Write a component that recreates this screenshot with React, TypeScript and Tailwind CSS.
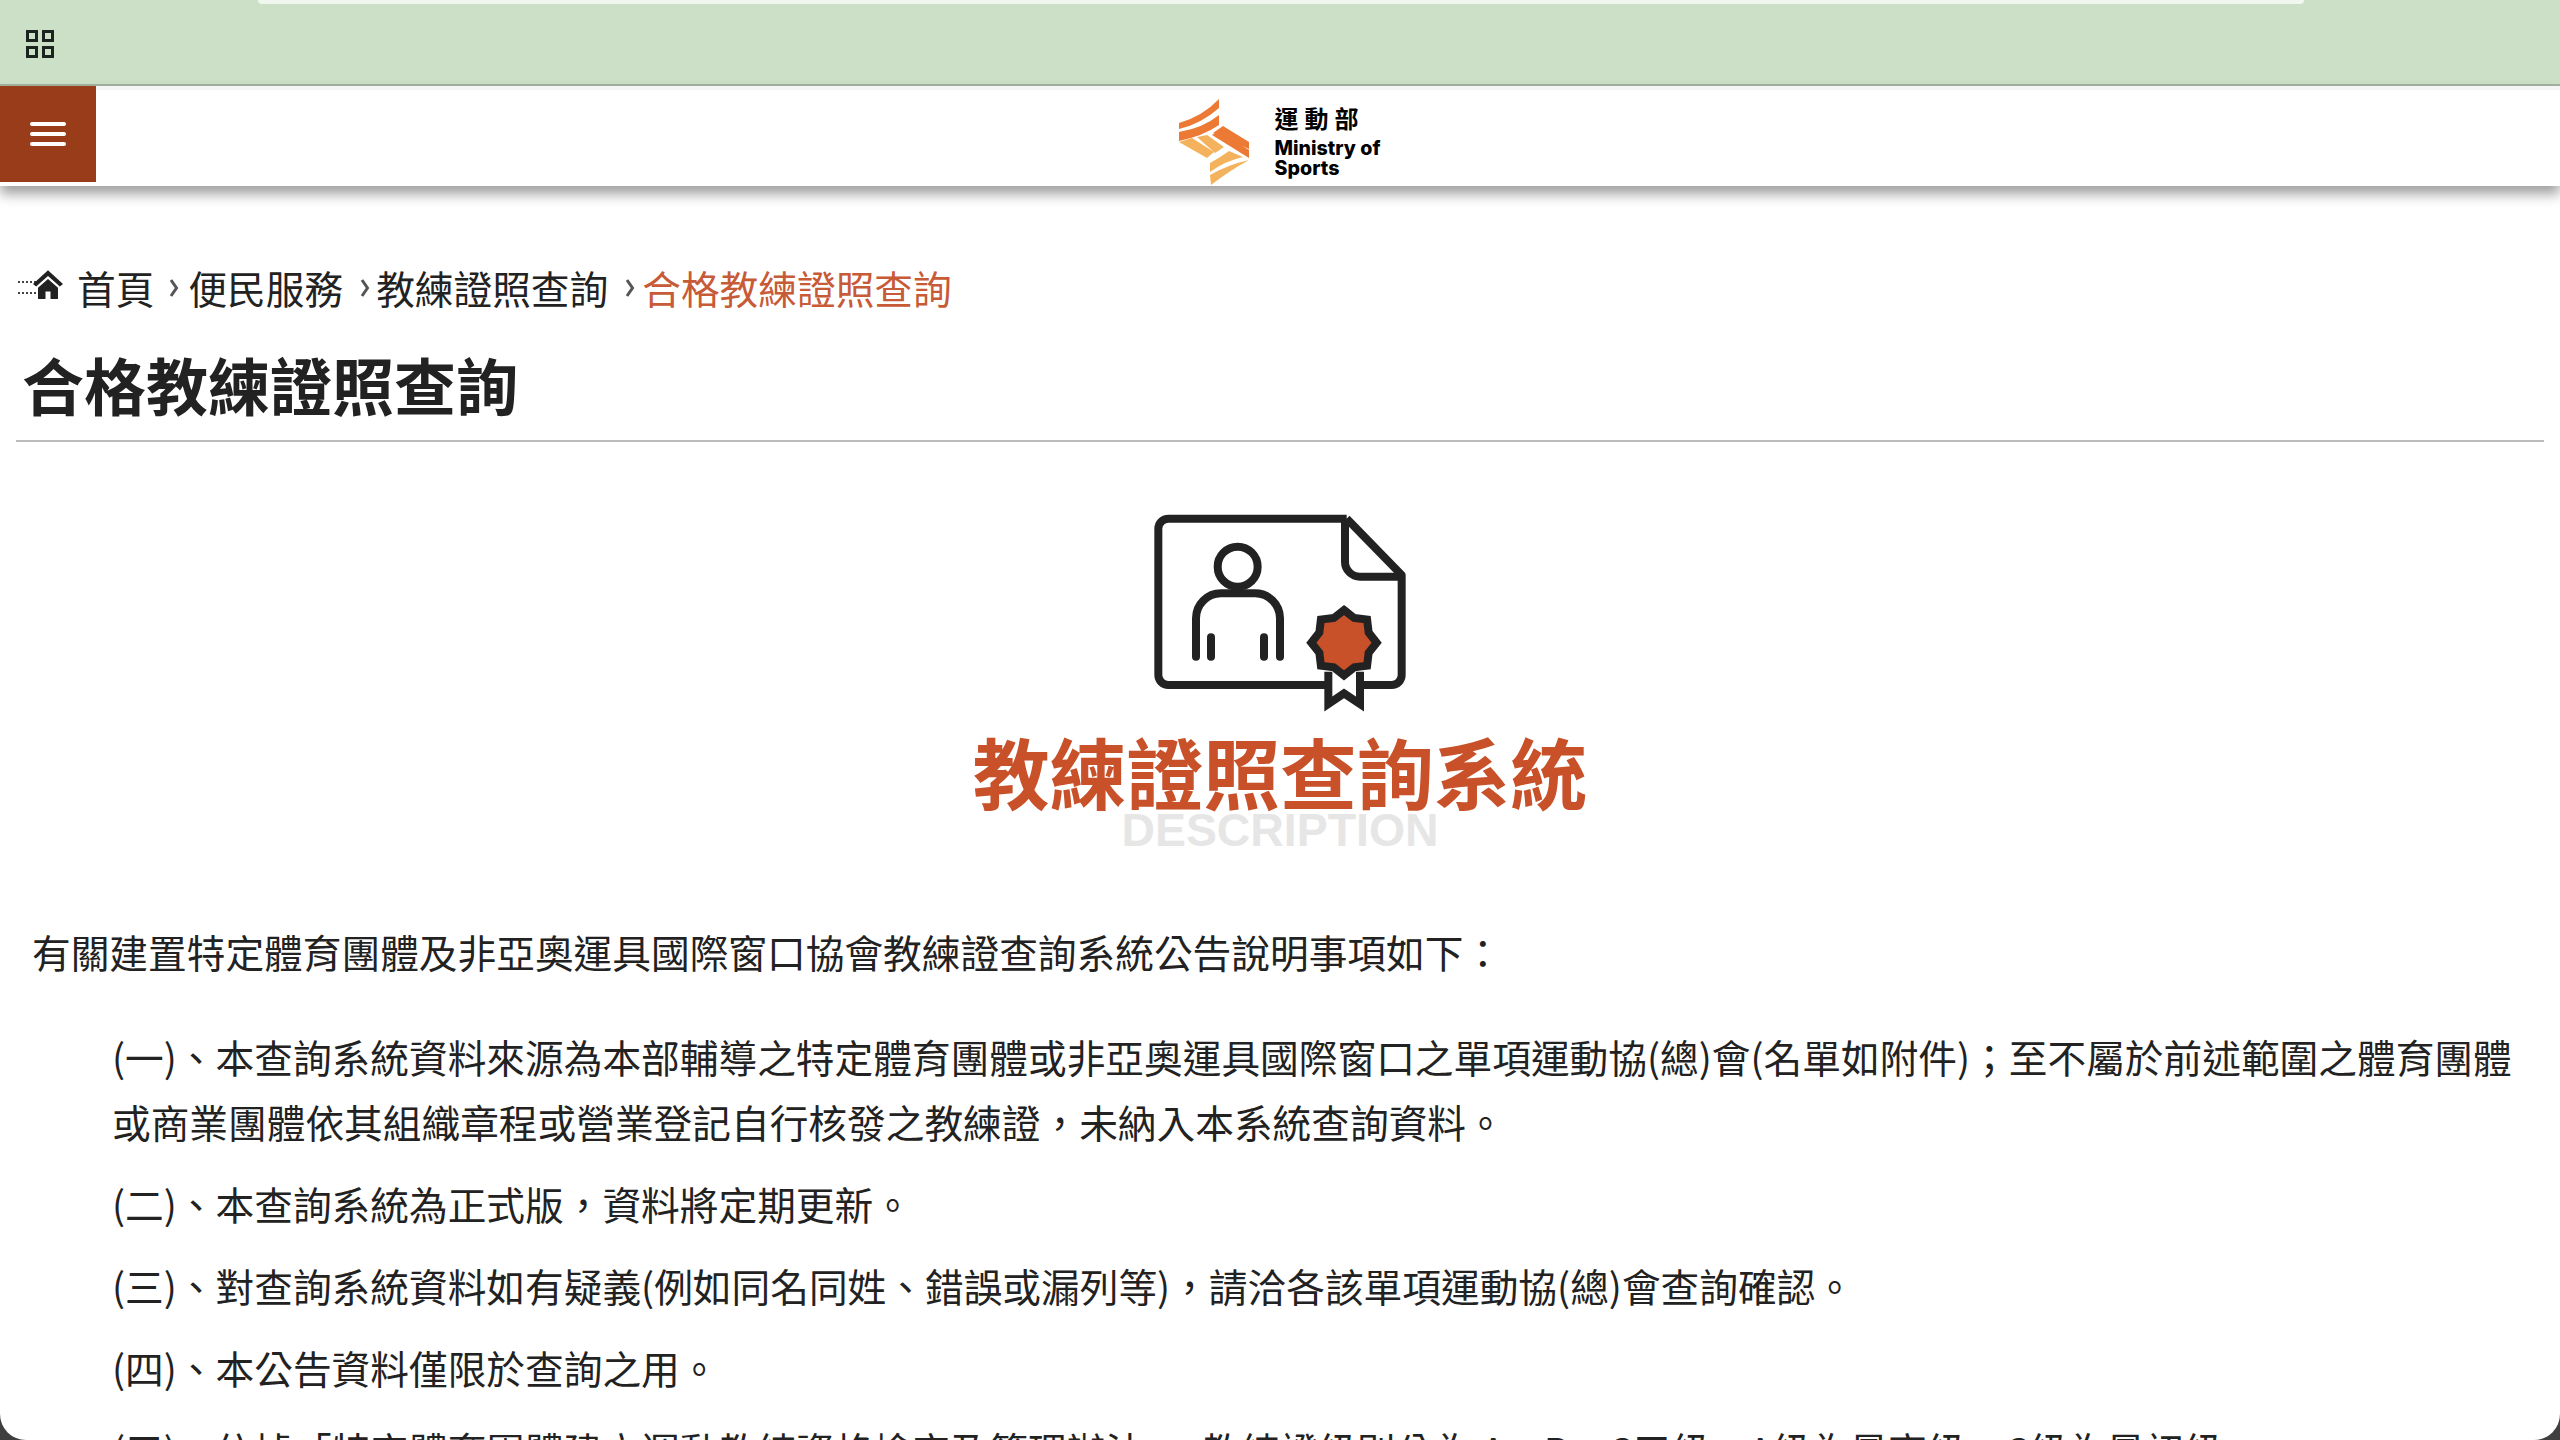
import React from 'react';

const cjk = { fontFamily: '"Noto Sans CJK TC", "Liberation Sans", sans-serif' };

const Chevron = () => (
  <svg viewBox="0 0 10 20" className="w-[10px] h-[20px] shrink-0 mt-[2px]">
    <path d="M2 2 L7.5 10 L2 18" fill="none" stroke="#555" strokeWidth="3" />
  </svg>
);

const Logo = () => (
  <svg viewBox="0 0 90 95" className="w-[90px] h-[95px] shrink-0 mt-[5px]">
    <path d="M10 28 Q34 21 50 4 V13 Q32 29 10 34 Z" fill="#ec7a35" />
    <path d="M10 37 Q34 33 50 20 V30 Q34 41 10 46 Z" fill="#ec7a35" />
    <path d="M10 47 L23 43 L45 57 L38 63 Z" fill="#f5b25c" />
    <path d="M28 42 L38 40 L55 52 L46 58 Z" fill="#f5b25c" />
    <path d="M54 31 L80 47 V54 L44 38 Z" fill="#ec7a35" />
    <path d="M43 40 L50 36 L80 55 V63 Z" fill="#ec7a35" />
    <path d="M41 68 Q52 62 60 56 L74 62 Q56 66 41 77 Z" fill="#f5b25c" />
    <path d="M41 80 Q58 70 80 65 Q60 76 42 90 Z" fill="#f5b25c" />
  </svg>
);

const CertIcon = () => {
  const pts: string[] = [];
  for (let i = 0; i < 16; i++) {
    const r = i % 2 === 0 ? 98 : 80;
    const a = (i * Math.PI) / 8 - Math.PI / 2;
    pts.push(`${642 + r * Math.cos(a)},${428 + r * Math.sin(a)}`);
  }
  return (
    <svg viewBox="0 0 900 660" className="w-[300px] h-[220px]" fill="none" stroke="#222" strokeWidth="24">
      <path d="M650 56 H115 a30 30 0 0 0 -30 30 V525 a30 30 0 0 0 30 30 H590 M700 555 H785 a30 30 0 0 0 30 -30 V225 L650 56" strokeLinejoin="round" />
      <path d="M645 60 V185 a45 45 0 0 0 45 45 H815" />
      <circle cx="323" cy="200" r="60" />
      <path d="M198 470 V355 a75 75 0 0 1 75 -75 H375 a75 75 0 0 1 75 75 V470 M243 412 V470 M402 412 V470" strokeLinecap="round" />
      <path d="M595 515 V612 L642 580 L690 612 V515" />
      <polygon points={pts.join(' ')} fill="#c8512a" />
    </svg>
  );
};

const App: React.FC = () => {
  return (
    <div className="w-[2560px] h-[1440px] bg-[#3f3f3f]" style={cjk}>
      <div className="w-full h-full bg-white rounded-b-[26px] overflow-hidden flex flex-col">
        <div className="h-[86px] shrink-0 bg-[#cbe0c6] border-b-[2px] border-[#a3b39e]">
          <div className="h-[4px] ml-[258px] mr-[256px] bg-[#f0f7ef] rounded-b-[14px]" />
          <div className="mt-[26px] ml-[26px] w-[28px] h-[28px] grid grid-cols-2 gap-[4px]">
            <div className="border-[3px] border-[#1c2420]" />
            <div className="border-[3px] border-[#1c2420]" />
            <div className="border-[3px] border-[#1c2420]" />
            <div className="border-[3px] border-[#1c2420]" />
          </div>
        </div>

        <header className="relative h-[100px] shrink-0 bg-white shadow-[0_8px_12px_rgba(0,0,0,0.38)] border-t-[4px] border-[#f6f6f6] flex justify-center">
          <button className="absolute left-0 -top-[4px] w-[96px] h-[96px] bg-[#983c1a] flex flex-col items-center justify-center gap-[6px]">
            <span className="block w-[36px] h-[4px] rounded-[2px] bg-white" />
            <span className="block w-[36px] h-[4px] rounded-[2px] bg-white" />
            <span className="block w-[36px] h-[4px] rounded-[2px] bg-white" />
          </button>
          <div className="flex items-start ml-[-11px]">
            <Logo />
            <div className="ml-[16px] mt-[12px] text-black">
              <div className="text-[24px] leading-[32px] font-bold tracking-[6px]">運動部</div>
              <div className="text-[19.6px] leading-[20px] font-extrabold mt-[4px] font-['Inter']">Ministry of</div>
              <div className="text-[19.6px] leading-[20px] font-extrabold font-['Inter']">Sports</div>
            </div>
          </div>
        </header>

        <main className="px-[16px] flex-1 min-h-0">
          <nav className="mt-[71px] h-[60px] flex items-center text-[38.7px] text-[#222]">
            <svg viewBox="0 0 18 14" className="w-[18px] h-[14px] shrink-0 ml-[2px] mt-[2px]">
              <path d="M0 1 H18 M0 12 H18" fill="none" stroke="#444" strokeWidth="2" strokeDasharray="2 2" />
            </svg>
            <svg viewBox="0 0 24 24" className="w-[32px] h-[30px] shrink-0 mb-[6px] ml-[-4px]">
              <path d="M12 1 L0 12 L2.5 14 L12 5.5 L21.5 14 L24 12 Z M12 8 L4 15 V24 H10 V18 H14 V24 H20 V15 Z" fill="#222" />
            </svg>
            <span className="ml-[13px]">首頁</span>
            <span className="ml-[15px] mr-[9px] flex"><Chevron /></span>
            <span>便民服務</span>
            <span className="ml-[17px] mr-[6px] flex"><Chevron /></span>
            <span>教練證照查詢</span>
            <span className="ml-[17px] mr-[7px] flex"><Chevron /></span>
            <span className="text-[#c75a37]">合格教練證照查詢</span>
          </nav>

          <h1 className="mt-[23px] pl-[6px] pb-[12px] text-[62px] leading-[88px] font-bold text-[#222] border-b-[2px] border-[#bbb]">
            合格教練證照查詢
          </h1>

          <section className="mt-[58px] flex flex-col items-center">
            <CertIcon />
            <h2 className="mt-[3px] text-[76.8px] leading-[96px] font-bold text-[#c8512a]">教練證照查詢系統</h2>
            <div className="mt-[-16px] text-[46.4px] leading-[54px] font-bold text-[#e6e6e6] font-['Liberation_Sans']">DESCRIPTION</div>
          </section>

          <section className="mt-[62px] text-[38.7px] leading-[65px] text-[#222]">
            <p className="pl-[16px]">有關建置特定體育團體及非亞奧運具國際窗口協會教練證查詢系統公告說明事項如下：</p>
            <div className="pl-[96px] pr-[20px] mt-[40px] flex flex-col gap-[17px]">
              <p>(一)、本查詢系統資料來源為本部輔導之特定體育團體或非亞奧運具國際窗口之單項運動協(總)會(名單如附件)；至不屬於前述範圍之體育團體或商業團體依其組織章程或營業登記自行核發之教練證，未納入本系統查詢資料。</p>
              <p>(二)、本查詢系統為正式版，資料將定期更新。</p>
              <p>(三)、對查詢系統資料如有疑義(例如同名同姓、錯誤或漏列等)，請洽各該單項運動協(總)會查詢確認。</p>
              <p>(四)、本公告資料僅限於查詢之用。</p>
              <p>(五)、依據「特定體育團體建立運動教練資格檢定及管理辦法」，教練證級別分為 A、B、C三級，A級為最高級，C級為最初級。</p>
            </div>
          </section>
        </main>
      </div>
    </div>
  );
};

export default App;
